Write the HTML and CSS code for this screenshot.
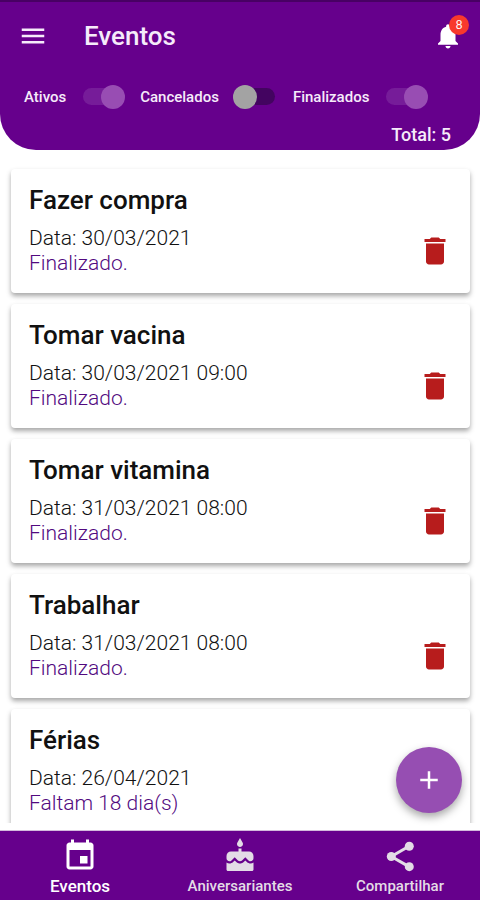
FILE: index.html
```html
<!DOCTYPE html>
<html lang="pt-BR">
<head>
<meta charset="utf-8">
<meta name="viewport" content="width=device-width, initial-scale=1">
<title>Eventos</title>
<link rel="stylesheet" href="styles.css">
</head>
<body>
<header class="header">
  <div class="bar">
    <button class="icon-button" type="button" aria-label="Menu">
      <svg class="icon-small" viewBox="0 0 24 24"><path d="M3 18h18v-2H3v2zm0-5h18v-2H3v2zm0-7v2h18V6H3z"/></svg>
    </button>
    <h1 class="title">Eventos</h1>
    <button class="icon-button bell" type="button" aria-label="Notificações">
      <svg class="icon-small" viewBox="0 0 24 24"><path d="M12 22c1.1 0 2-.9 2-2h-4c0 1.100.89 2 2 2zm6-6v-5c0-3.070-1.640-5.640-4.500-6.320V4c0-.83-.67-1.500-1.500-1.500s-1.500.67-1.500 1.500v.68C7.630 5.360 6 7.920 6 11v5l-2 2v1h16v-1l-2-2z"/></svg>
      <span class="badge">8</span>
    </button>
  </div>
  <div class="filters">
    <label class="filter">Ativos<input class="switch" type="checkbox" role="switch" checked></label>
    <label class="filter">Cancelados<input class="switch" type="checkbox" role="switch"></label>
    <label class="filter">Finalizados<input class="switch" type="checkbox" role="switch" checked></label>
  </div>
  <p class="total">Total: 5</p>
</header>

<main class="content">
  <div class="list">
    <article class="card">
      <div><h2 class="name">Fazer compra</h2><p class="line">Data: 30/03/2021</p><p class="line status">Finalizado.</p></div>
      <button class="icon-button delete" type="button" aria-label="Excluir"><svg class="icon" viewBox="0 0 24 24"><path d="M6 19c0 1.100.9 2 2 2h8c1.100 0 2-.9 2-2V7H6v12zM19 4h-3.500l-1-1h-5l-1 1H5v2h14V4z"/></svg></button>
    </article>
    <article class="card">
      <div><h2 class="name">Tomar vacina</h2><p class="line">Data: 30/03/2021 09:00</p><p class="line status">Finalizado.</p></div>
      <button class="icon-button delete" type="button" aria-label="Excluir"><svg class="icon" viewBox="0 0 24 24"><path d="M6 19c0 1.100.9 2 2 2h8c1.100 0 2-.9 2-2V7H6v12zM19 4h-3.500l-1-1h-5l-1 1H5v2h14V4z"/></svg></button>
    </article>
    <article class="card">
      <div><h2 class="name">Tomar vitamina</h2><p class="line">Data: 31/03/2021 08:00</p><p class="line status">Finalizado.</p></div>
      <button class="icon-button delete" type="button" aria-label="Excluir"><svg class="icon" viewBox="0 0 24 24"><path d="M6 19c0 1.100.9 2 2 2h8c1.100 0 2-.9 2-2V7H6v12zM19 4h-3.500l-1-1h-5l-1 1H5v2h14V4z"/></svg></button>
    </article>
    <article class="card">
      <div><h2 class="name">Trabalhar</h2><p class="line">Data: 31/03/2021 08:00</p><p class="line status">Finalizado.</p></div>
      <button class="icon-button delete" type="button" aria-label="Excluir"><svg class="icon" viewBox="0 0 24 24"><path d="M6 19c0 1.100.9 2 2 2h8c1.100 0 2-.9 2-2V7H6v12zM19 4h-3.500l-1-1h-5l-1 1H5v2h14V4z"/></svg></button>
    </article>
    <article class="card">
      <div><h2 class="name">Férias</h2><p class="line">Data: 26/04/2021</p><p class="line status">Faltam 18 dia(s)</p></div>
    </article>
  </div>
  <button class="fab" type="button" aria-label="Adicionar evento"><svg class="icon-small" viewBox="0 0 24 24"><path d="M19 13h-6v6h-2v-6H5v-2h6V5h2v6h6v2z"/></svg></button>
</main>

<nav class="tabs">
  <a class="tab active" href="#eventos" aria-current="page">
    <svg class="icon" viewBox="0 0 24 24"><path d="M17 12h-5v5h5v-5zM16 1v2H8V1H6v2H5c-1.110 0-1.990.9-1.990 2L3 19c0 1.100.89 2 2 2h14c1.100 0 2-.9 2-2V5c0-1.100-.9-2-2-2h-1V1h-2zm3 18H5V8h14v11z"/></svg>
    Eventos
  </a>
  <a class="tab" href="#aniversariantes">
    <svg class="icon" viewBox="0 0 24 24"><path d="M12 6c1.110 0 2-.9 2-2 0-.38-.1-.73-.29-1.030L12 0l-1.710 2.970c-.19.300-.29.650-.29 1.030 0 1.100.9 2 2 2zm4.600 9.990l-1.070-1.070-1.080 1.070c-1.300 1.300-3.580 1.310-4.890 0l-1.070-1.070-1.090 1.070C6.750 16.640 5.880 17 4.960 17c-.73 0-1.400-.23-1.960-.61V21c0 .55.45 1 1 1h16c.55 0 1-.45 1-1v-4.610c-.56.38-1.230.61-1.960.61-.92 0-1.790-.36-2.440-1.010zM18 9h-5V7h-2v2H6c-1.660 0-3 1.340-3 3v1.540c0 1.080.88 1.960 1.960 1.960.52 0 1.020-.2 1.380-.57l2.140-2.130 2.130 2.130c.74.74 2.030.74 2.770 0l2.140-2.130 2.130 2.130c.37.37.86.57 1.380.57 1.080 0 1.960-.88 1.960-1.960V12C21 10.340 19.660 9 18 9z"/></svg>
    Aniversariantes
  </a>
  <a class="tab" href="#compartilhar">
    <svg class="icon" viewBox="0 0 24 24"><path class="links" d="M18 5.500 6.200 12.300 18 19.100"/><circle cx="6.200" cy="12.300" r="3"/><circle cx="18.200" cy="5.500" r="3"/><circle cx="18.200" cy="19.100" r="3"/></svg>
    Compartilhar
  </a>
</nav>
</body>
</html>
```
FILE: styles.css
```css
* {
  box-sizing: border-box;
}

body {
  display: flex;
  flex-direction: column;
  height: 100vh;
  margin: 0;
  background: #fff;
  color: #111;
  font-family: Roboto, sans-serif;
}

h1, h2, p {
  margin: 0;
}

svg {
  display: block;
  fill: currentColor;
}

.icon {
  width: 36px;
  height: 36px;
}

.icon-small {
  width: 30px;
  height: 30px;
}

.links {
  fill: none;
  stroke: currentColor;
  stroke-width: 2;
}

.icon-button {
  padding: 0;
  border: 0;
  background: none;
  color: inherit;
  cursor: pointer;
}

.header {
  flex: none;
  border-top: 2px solid #480063;
  border-radius: 0 0 36px 36px;
  background: #66008c;
  color: #f6ebfa;
}

.bar {
  display: flex;
  align-items: center;
  height: 67px;
  padding: 0 17px 0 18px;
}

.title {
  flex: 1;
  margin-left: 36px;
  font-size: 26px;
  font-weight: 500;
}

.bell {
  position: relative;
  color: #fff;
}

.badge {
  position: absolute;
  top: -6px;
  right: -6px;
  width: 20px;
  border-radius: 50%;
  background: #f8392c;
  font-size: 12px;
  line-height: 20px;
  text-align: center;
}

.filters {
  display: flex;
  align-items: center;
  gap: 15px;
  height: 55px;
  padding: 0 24px;
}

.filter {
  display: flex;
  align-items: center;
  gap: 14px;
  font-size: 15px;
  font-weight: 500;
}

.switch {
  display: flex;
  align-items: center;
  width: 39px;
  height: 17px;
  margin: 0 3px;
  border-radius: 9px;
  appearance: none;
  background: #430460;
}

.switch::before {
  flex: none;
  width: 24px;
  height: 24px;
  margin: 0 -3px;
  border-radius: 50%;
  background: #a3a3a3;
  content: "";
}

.switch:checked {
  justify-content: flex-end;
  background: #761c99;
}

.switch:checked::before {
  background: #984db3;
}

.total {
  padding: 0 29px 4px;
  font-size: 18px;
  font-weight: 500;
  line-height: 22px;
  text-align: right;
}

.content {
  position: relative;
  flex: 1;
  min-height: 0;
  padding-bottom: 7px;
}

.list {
  display: flex;
  flex-direction: column;
  gap: 11px;
  height: 100%;
  padding: 19px 10px 0 11px;
  overflow: hidden;
}

.card {
  display: flex;
  flex: none;
  justify-content: space-between;
  padding: 14px 17px 17px 18px;
  border-radius: 4px;
  background: #fff;
  box-shadow: 0 3px 5px rgba(0, 0, 0, 0.35);
}

.name {
  margin-bottom: 9px;
  font-size: 26px;
  font-weight: 500;
  line-height: 34px;
}

.line {
  font-size: 21px;
  font-weight: 300;
  line-height: 25px;
  color: #111;
}

.status {
  color: #520a80;
}

.delete {
  align-self: flex-end;
  margin-bottom: 7px;
  color: #b71c1c;
}

.fab {
  position: absolute;
  right: 18px;
  bottom: 17px;
  display: grid;
  place-items: center;
  width: 66px;
  height: 66px;
  padding: 0;
  border: 0;
  border-radius: 50%;
  background: #964eb2;
  box-shadow: 0 4px 8px rgba(0, 0, 0, 0.35);
  color: #fff;
}

.tabs {
  display: grid;
  flex: none;
  grid-template-columns: repeat(3, 1fr);
  height: 70px;
  border-top: 1px solid #d3bbdd;
  background: #66008c;
}

.tab {
  display: flex;
  flex-direction: column;
  align-items: center;
  padding-top: 7px;
  color: #e3dce6;
  font-size: 15px;
  font-weight: 500;
  line-height: 24px;
  text-decoration: none;
}

.active {
  color: #fff;
  font-size: 17px;
}
```
